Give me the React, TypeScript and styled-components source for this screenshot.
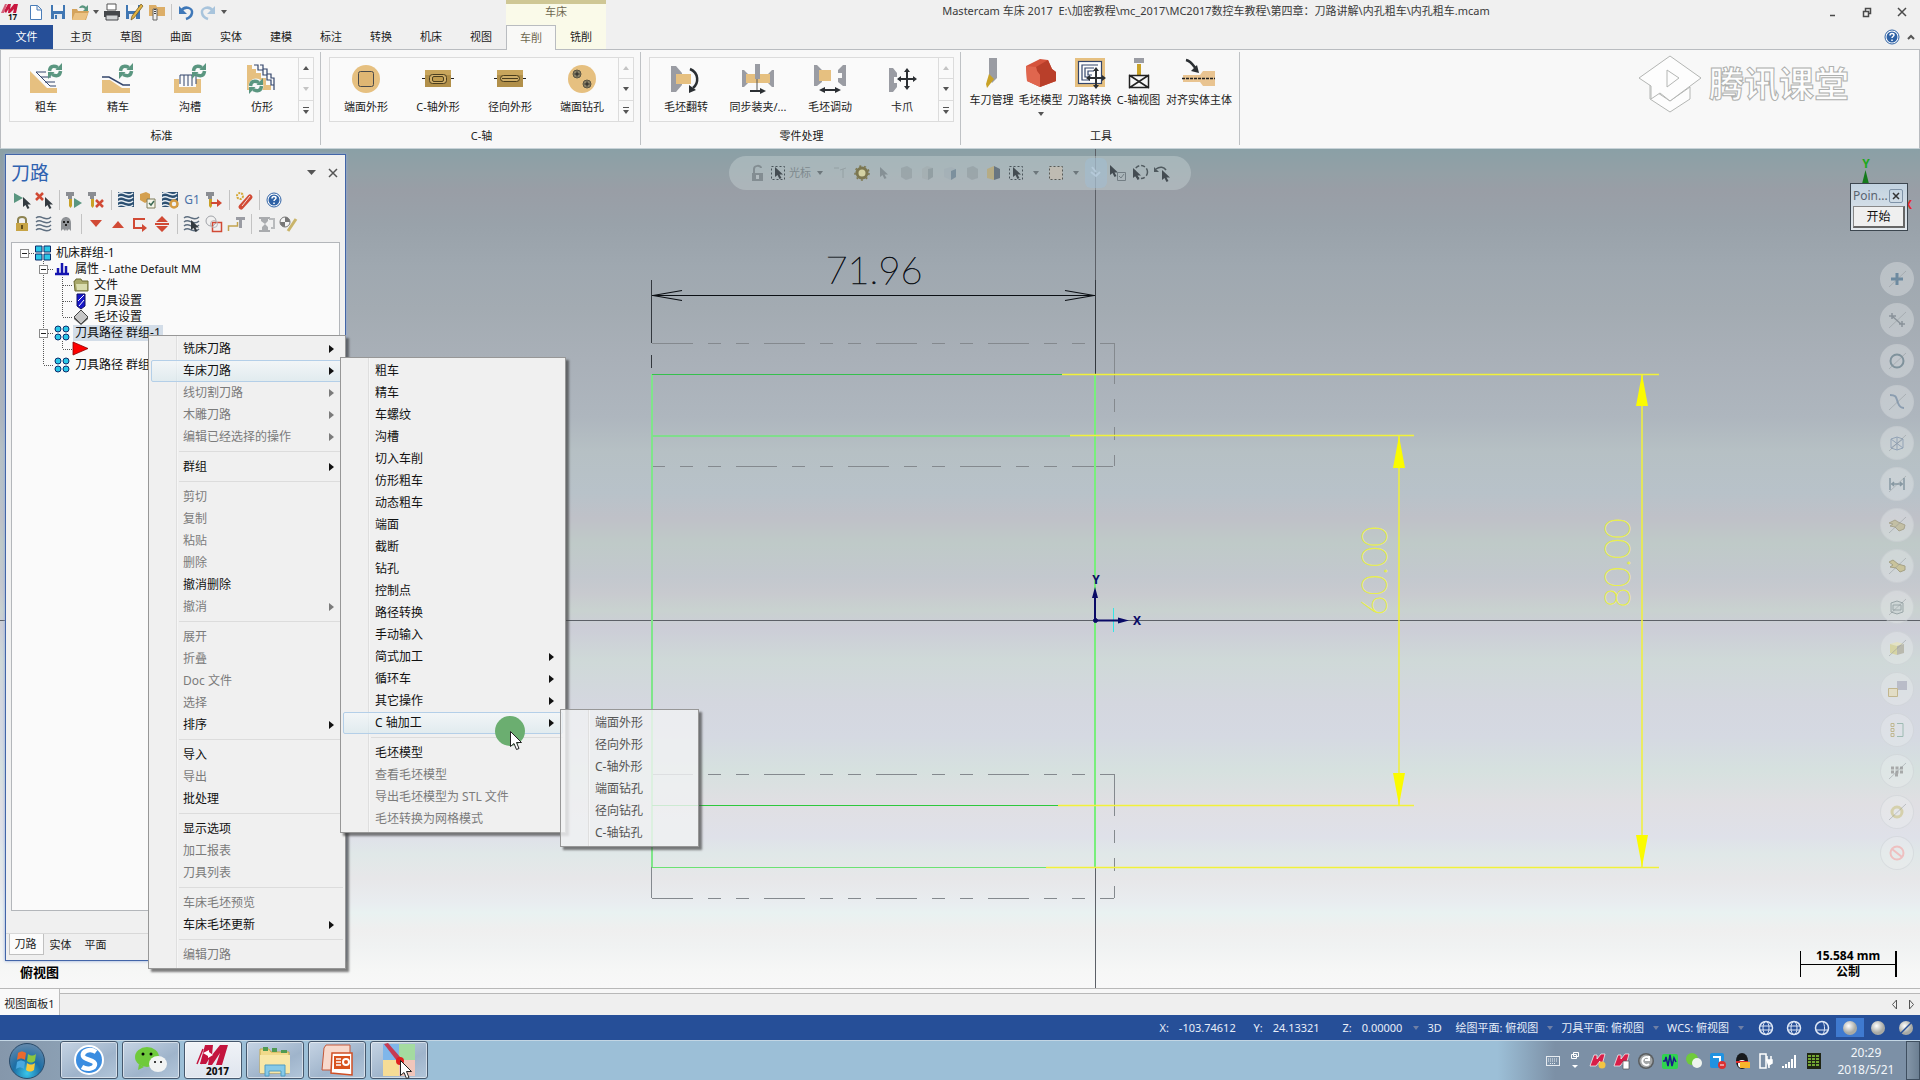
import React from "react";
import styled, { createGlobalStyle, css } from "styled-components";

const UI = `"Noto Sans", "Noto Sans CJK SC", sans-serif`;
const ORANGE = "#e6c080";
const NAVY = "#33456b";
const GREEN = "#5a9680";
const RED = "#d14a35";
const BLUE = "#2f62a5";
const GREY = "#9a9ca3";

const GlobalStyle = createGlobalStyle`
  *, *::before, *::after { box-sizing: border-box; }
  body { margin: 0; background: #efefef; font: 11px/16px ${UI}; color: #222; overflow: hidden; }
  button { font: inherit; color: inherit; border: 0; padding: 0; margin: 0; background: none; }
  ul { list-style: none; margin: 0; padding: 0; }
  svg { display: block; flex: none; overflow: visible; }
`;

/* ---------- icons ---------- */

const refresh = (x: number, y: number) => (
  <g transform={`translate(${x} ${y})`} fill="none" stroke={GREEN} strokeWidth="3.500">
    <path d="M1.500 7C2 2.500 5 1 10 3.500" />
    <path d="M12.500 7C12 11.500 9 13 4 10.500" />
    <path d="M14 -1v7H7.500z" fill={GREEN} stroke="none" />
    <path d="M0 15V8h6.500z" fill={GREEN} stroke="none" />
  </g>
);
const pointer = (x: number, y: number) => (
  <path transform={`translate(${x} ${y})`} d="M0 0v10l2.500-2 2 4 2-1-2-3.500H8z" fill="#333a40" />
);
const moveCross = (x: number, y: number) => (
  <g transform={`translate(${x} ${y})`} stroke="#2b2f33" strokeWidth="2" fill="#2b2f33">
    <path d="M-7 0H7M0-7V7" />
    <path stroke="none" d="M-10 0l4-3v6zM10 0l-4-3v6zM0-11l-3 4h6zM0 11l-3-4h6z" />
  </g>
);
const holder = (
  <>
    <path d="M1 1h8v4H7v3H3V5H1z" fill="#8a8d92" />
    <path d="M4 8h3v7l-1.500 2L4 15z" fill="#c9a227" />
  </>
);
const wavy = (stroke: string) => (
  <g fill="none" stroke={stroke} strokeWidth="1.500">
    {[3, 7, 11, 15].map((y) => (
      <path key={y} d={`M1 ${y}c3-2.500 5-1 7.500 0s5 1.500 7.500-1`} />
    ))}
  </g>
);

type Drawing = { w: number; h: number; d: React.ReactNode };
const ICONS: Record<string, Drawing> = {
  roughTurn: { w: 32, h: 30, d: (<><path d="M0 7L17 24H27v5H0z" fill={ORANGE} /><path d="M6 8l14 14h6M6 8h10M11 13h10M15 18h10" fill="none" stroke={NAVY} />{refresh(18, 0)}</>) },
  finishTurn: { w: 32, h: 30, d: (<><path d="M0 16h8l12 8h8v5H0z" fill={ORANGE} /><path d="M0 13h7l14 8h7" fill="none" stroke={NAVY} strokeWidth="1.500" />{refresh(17, 0)}</>) },
  groove: { w: 32, h: 30, d: (<><path d="M0 15h5v8h17v-8h5v14H0z" fill={ORANGE} /><path d="M6 20v-9h16v9M10 11v11M14 11v11M18 11v11" fill="none" stroke={NAVY} />{refresh(18, 0)}</>) },
  contour: { w: 32, h: 30, d: (<><path d="M1 1h5v4h4v4h5v5h5v7h5v5H1z" fill={ORANGE} /><path d="M8 1h4v5h5v5h4v5h4v5h3v5M14 1h3v4h4v5h4v4h3v12" fill="none" stroke={NAVY} strokeWidth="1.200" />
    <circle cx="10" cy="22" r="7.500" fill="#f8f8f8" />{refresh(3, 15)}</>) },
  faceContour: { w: 32, h: 30, d: (<><circle cx="16" cy="15" r="14" fill={ORANGE} /><rect x="8.500" y="7.500" width="15" height="15" rx="2" fill="#dfb673" stroke="#4a4a4a" /></>) },
  cContour: { w: 32, h: 30, d: (<><path d="M0 14.500h32" stroke="#222" /><rect x="3" y="6" width="26" height="17" fill="#b18f49" /><rect x="3" y="6" width="26" height="5" fill="#c8a55c" /><rect x="7.500" y="10.500" width="17" height="9" rx="3" fill="#d1b06b" stroke="#4a3d1d" /><rect x="10.500" y="12.500" width="11" height="5" rx="1.500" fill="#c09c50" stroke="#4a3d1d" /></>) },
  crossContour: { w: 32, h: 30, d: (<><path d="M0 14.500h32" stroke="#222" /><rect x="3" y="6" width="26" height="17" fill="#b18f49" /><rect x="3" y="6" width="26" height="5" fill="#c8a55c" /><rect x="6.500" y="11.500" width="19" height="6" rx="3" fill="#cfae69" stroke="#4a3d1d" /><path d="M8 14.500h16" stroke="#4a3d1d" /></>) },
  faceDrill: { w: 32, h: 30, d: (<><circle cx="16" cy="15" r="14" fill={ORANGE} /><g stroke="#5b5442" fill="#8b8268"><circle cx="11" cy="10" r="4" /><circle cx="21" cy="20" r="4" /></g><path d="M11 7.500v5M8.500 10h5M21 17.500v5M18.500 20h5" stroke="#222" /></>) },
  flip: { w: 32, h: 30, d: (<><path d="M1 2h5l6 7v12l-6 7H1z" fill={GREY} /><rect x="6" y="10" width="15" height="10" fill={ORANGE} /><path d="M20 5c9 4 9 14 3 19" fill="none" stroke="#2b2f33" strokeWidth="2.500" /><path d="M19 29v-8l7 5z" fill="#2b2f33" /></>) },
  pickoff: { w: 32, h: 30, d: (<><path d="M0 6h2l6 6v5l-6 6H0zM32 6h-2l-6 6v5l6 6h2z" fill={GREY} /><rect x="4" y="10" width="24" height="9" fill={ORANGE} /><path d="M13 0h5v15h-5z" fill={GREY} /><path d="M15 15v11" stroke="#555" /><path d="M8 27h12" stroke="#2b2f33" strokeWidth="2" /><path d="M24 27l-6-3v6z" fill="#2b2f33" /></>) },
  barfeed: { w: 34, h: 30, d: (<><path d="M1 1h3l5 5v12l-5 4H1zM33 1h-3l-5 5v3h4v5h-4v4l5 4h3z" fill={GREY} /><rect x="6" y="6" width="12" height="11" fill={ORANGE} /><path d="M10 26h14" stroke="#2b2f33" strokeWidth="2" /><path d="M6 26l6-3v6zM28 26l-6-3v6z" fill="#2b2f33" /></>) },
  chuck: { w: 32, h: 30, d: (<><path d="M3 4h4l4 5v4H8v6h3v4l-4 5H3z" fill={GREY} />{moveCross(21, 15)}</>) },
  toolManager: { w: 32, h: 30, d: (<><path d="M13 0h8v20l-5 5-3-5z" fill={GREY} /><path d="M13 16l5 5-7 9-1-4z" fill="#c9a227" /></>) },
  stockModel: { w: 32, h: 30, d: (<><path d="M1 8L15 1l8 1 4 9 4 3v9L15 29 2 23z" fill="#d5533c" /><path d="M15 29V17l-3-4-1-4 12-7 4 9 4 3v9z" fill="#b93f2a" /><path d="M1 8l10 1 1 4 3 4v12L2 23z" fill="#e0664e" /></>) },
  transform: { w: 32, h: 30, d: (<><rect x="1" y="0" width="30" height="29" fill={ORANGE} /><rect x="5" y="4" width="22" height="21" fill="#fdfdfd" /><g fill="none" stroke={NAVY} strokeWidth="1.200"><rect x="4.500" y="3.500" width="23" height="22" /><path d="M24 7H8v15h8M20 10h-9v9h6M20 13h-6v4h4" /></g>{moveCross(22, 20)}</>) },
  cView: { w: 32, h: 30, d: (<><rect x="11" y="0" width="10" height="5" fill={GREY} /><rect x="14" y="6" width="4" height="12" fill="#c9a227" /><path d="M6.500 17.500h19v12h-19zM6 17l20 13M26 17L6 30" fill="none" stroke="#222" strokeWidth="1.500" /></>) },
  align: { w: 34, h: 30, d: (<><path d="M1 17h17l3-4h12v15H21l-3-4H1z" fill="#e9c491" /><path d="M0 20.500h33" stroke="#222" strokeWidth="1.500" strokeDasharray="3 1" /><path d="M4 2c5 1 7 5 10 9" stroke="#2b2f33" strokeWidth="2.500" fill="none" /><path d="M17 15l-8-2 6-6z" fill="#2b2f33" /></>) },

  app: { w: 18, h: 18, d: (<><path d="M3 8L7 1h3L9 6l4-5h4l-2 9h-3l1-4-4 4H7l.5-4L5 10z" fill="#c8173f" /><path d="M0 10l4-9h2L3 10z" fill="#d5617a" /><text x="7" y="17" fontSize="8" fontWeight="700" fill="#111">17</text></>) },
  newDoc: { w: 18, h: 18, d: <path d="M3.500 2.500h7l4 4v10h-11zM10 2.500V7h4.500" fill="#fff" stroke="#4a7db8" /> },
  save: { w: 18, h: 18, d: (<><path d="M2 2h14v14H2z" fill="#4077b3" /><path d="M4 2h10v6H4z" fill="#f5f5f5" /><path d="M5 11h8v5H5z" fill="#e4e9ef" /><path d="M6 12h2v4H6z" fill="#4077b3" /></>) },
  open: { w: 18, h: 18, d: (<><path d="M1 6h5l1 2h8l3 0-3 9H1z" fill="#d4a35c" /><path d="M4 10h13l-3 7H1z" fill="#ebc283" /><path d="M8 5c2-4 5-3 7-1l2-2v6h-5l2-2c-2-2-4-1-6-1z" fill={GREEN} /></>) },
  print: { w: 18, h: 18, d: (<><path d="M4 1h9v6H4z" fill="#fff" stroke="#555" /><path d="M1 8h16v6H1z" fill="#44474b" /><path d="M3 12h12v5H3z" fill="#d2d4d6" stroke="#44474b" /></>) },
  saveAs: { w: 18, h: 18, d: (<><path d="M1 2h14v14H1z" fill="#4077b3" /><path d="M3 2h10v6H3z" fill="#f5f5f5" /><path d="M4 11h7v5H4z" fill="#e4e9ef" /><path d="M16 1l2 2-9 12-3 2 1-4z" fill="#e3b341" stroke="#6b5520" strokeWidth=".7" /></>) },
  zip: { w: 18, h: 18, d: (<><path d="M2 2h7l1 2h8v9H2z" fill="#dcae68" /><path d="M6 6h4v11H6z" fill="#f0f0f0" stroke="#666" /><path d="M8 6v6" stroke="#444" strokeDasharray="1 1" strokeWidth="2" /></>) },
  undo: { w: 18, h: 18, d: (<><path d="M4 8c4-6 12-3 11 2-.5 3-3 5-6 6" fill="none" stroke="#3f78b8" strokeWidth="2.500" /><path d="M2 3v8h8z" fill="#3f78b8" /></>) },
  redo: { w: 18, h: 18, d: (<><path d="M14 8C10 2 2 5 3 10c.5 3 3 5 6 6" fill="none" stroke="#a8c4dc" strokeWidth="2.500" /><path d="M16 3v8H8z" fill="#a8c4dc" /></>) },
  help: { w: 16, h: 16, d: (<><circle cx="8" cy="8" r="7" fill="#fff" stroke={BLUE} /><circle cx="8" cy="8" r="5.500" fill={BLUE} /><path d="M6 6.500c0-3 4-2.500 4-.5 0 1.500-2 1.500-2 3M8 10.500v1.500" stroke="#fff" strokeWidth="1.500" fill="none" /></>) },

  playSel: { w: 18, h: 18, d: (<><path d="M1 2l9 5-9 5z" fill={GREEN} />{pointer(10, 6)}</>) },
  xSel: { w: 18, h: 18, d: (<><path d="M1 2l7 7M8 2L1 9" stroke={RED} strokeWidth="2.500" />{pointer(10, 6)}</>) },
  toolPlay: { w: 18, h: 18, d: (<>{holder}<path d="M9 7l8 5-8 5z" fill={GREEN} /></>) },
  toolX: { w: 18, h: 18, d: (<>{holder}<path d="M9 9l7 7M16 9l-7 7" stroke={RED} strokeWidth="2.500" /></>) },
  wavesDark: { w: 18, h: 18, d: (<><rect x="1" y="1" width="16" height="15" fill="#2c5072" />{wavy("#e8eef4")}</>) },
  verify: { w: 18, h: 18, d: (<><path d="M1 3l6-2 4 2v6l-5 3-5-3z" fill="#d4a04f" /><path d="M8 8h8v9H8z" fill="#f5f5ea" stroke="#7c7a58" /><path d="M10 12l2 2 3-4" fill="none" stroke="#3e6a55" strokeWidth="1.500" /></>) },
  wavesGear: { w: 18, h: 18, d: (<><rect x="1" y="1" width="16" height="15" fill="#2c5072" />{wavy("#e8eef4")}<circle cx="13" cy="13" r="3.500" fill="#f0f0f0" stroke="#d59b42" strokeWidth="2.500" /></>) },
  toolArrow: { w: 18, h: 18, d: (<>{holder}<path d="M6 12h8" stroke={RED} strokeWidth="2" /><path d="M17 12l-5-4v8z" fill={RED} /></>) },
  wand: { w: 18, h: 18, d: (<><path d="M6 16L15 6" stroke={RED} strokeWidth="5" strokeLinecap="round" /><path d="M7 15l8-10" stroke="#f3ddd8" /><circle cx="5" cy="5" r="3" fill="none" stroke="#d5a93b" strokeWidth="2" strokeDasharray="2 1" /></>) },
  lock: { w: 18, h: 18, d: (<><path d="M5 8V5c0-4 8-4 8 0v3" fill="none" stroke="#8d8350" strokeWidth="2" /><rect x="3" y="8" width="12" height="8" fill="#c7a445" /><path d="M9 10v4" stroke="#5f4d1c" strokeWidth="2" /></>) },
  waves: { w: 18, h: 18, d: wavy("#5f6f80") },
  ghost: { w: 18, h: 18, d: (<><path d="M4 16V8c0-8 10-8 10 0v8l-2-2-2 2-1-2-1 2-2-2z" fill="#8f9296" /><path d="M6 6h2v2H6zM10 6h2v2h-2zM8 9h2v2H8z" fill="#222" /></>) },
  triDown: { w: 18, h: 18, d: <path d="M3 5h12l-6 7z" fill={RED} /> },
  triUp: { w: 18, h: 18, d: <path d="M3 13h12L9 6z" fill={RED} /> },
  loopArrow: { w: 18, h: 18, d: (<><path d="M14 4H3v9h8" fill="none" stroke={RED} strokeWidth="2" /><path d="M16 13l-5-4v8z" fill={RED} /></>) },
  triBoth: { w: 18, h: 18, d: <path d="M9 1l6 6H3zM9 17l6-6H3zM2 8h14v2H2z" fill={RED} /> },
  wavesPick: { w: 18, h: 18, d: (<>{wavy("#5f6f80")}{pointer(8, 5)}</>) },
  shapes: { w: 18, h: 18, d: (<><circle cx="6" cy="6" r="5" fill="none" stroke="#a0a3a8" /><path d="M7.500 7.500h9v9h-9z" fill="none" stroke={RED} strokeWidth="1.500" /><circle cx="9" cy="9" r="3.500" fill="none" stroke="#b9b9b9" /></>) },
  stepTool: { w: 18, h: 18, d: (<><path d="M1.500 16v-5h9V7" fill="none" stroke="#c2a34e" strokeWidth="1.500" /><path d="M9 2h9v3h-3v8h-3V5H9z" fill="#9a9ca3" /></>) },
  machineOff: { w: 18, h: 18, d: (<><path d="M2 2h11v2h-2v2l-3 3 3 3v3h2v2H2v-2h3v-3l3-3-4-3V4H2z" fill="#a9abae" /><path d="M12 4h5v9h-3" fill="none" stroke="#b9bbbd" strokeWidth="2" /></>) },
  ballTool: { w: 18, h: 18, d: (<><circle cx="6" cy="7" r="5" fill="#f5f5f5" stroke="#777" /><path d="M6 2a5 5 0 015 5H6zM6 12a5 5 0 01-5-5h5z" fill="#777" /><path d="M17 4L9 16" stroke="#c9b46a" strokeWidth="3" /></>) },

  machineGroup: { w: 16, h: 16, d: <path d="M.5 1h6.500v6H.5zM9 1h6.500v6H9zM.5 9h6.500v6H.5zM9 9h6.500v6H9z" fill="#2ac7e8" stroke="#0b2c6b" /> },
  props: { w: 16, h: 16, d: <path d="M1 13h14M4 12V7M8 12V2M12 12V5" stroke="#1414b0" strokeWidth="2.500" /> },
  files: { w: 16, h: 16, d: (<><path d="M1 4h1l1-2h5l1 2h6v10H2z" fill="#a8a86a" stroke="#6d6d35" /><path d="M3 7h11v6H4z" fill="#d9dcae" /></>) },
  toolSet: { w: 16, h: 16, d: (<><path d="M4 1h8v12l-4 3-4-3z" fill="#1616c8" stroke="#101060" /><path d="M5 8l6-6M6 13l5-6" stroke="#fff" /></>) },
  stock: { w: 16, h: 16, d: (<><path d="M8 1l7 7-7 7-7-7z" fill="#c6c6c6" stroke="#444" /><path d="M1 8l7 7 7-7v2l-7 6-7-6z" fill="#555" /></>) },
  pathGroup: { w: 16, h: 16, d: (<g fill="#2ac7e8" stroke="#0b2c6b"><circle cx="4" cy="4" r="3" /><circle cx="12" cy="4" r="3" /><circle cx="4" cy="12" r="3" /><circle cx="12" cy="12" r="3" /></g>) },
  insert: { w: 16, h: 16, d: <path d="M0 1l15 6.500L0 14z" fill="#f00" stroke="#800" strokeWidth=".8" /> },

  selLock: { w: 18, h: 18, d: (<><path d="M5 9V5c0-4 7-4 7-1" fill="none" stroke="#7d878c" strokeWidth="2" /><path d="M3 9h11v8H3z" fill="#7d878c" /><path d="M7 11h3v4H7z" fill="#b5bec2" /></>) },
  selPick: { w: 18, h: 18, d: (<><path d="M2.500 2.500h13v13h-13z" fill="none" stroke="#3a454b" strokeDasharray="2 2" />{pointer(6, 3)}</>) },
  faintArrow: { w: 18, h: 18, d: <g opacity=".35">{pointer(5, 3)}</g> },
  axisPick: { w: 18, h: 18, d: <path d="M3 4h5M12 5v9M9 6l6-2" stroke="#8a9498" fill="none" opacity=".7" /> },
  gear: { w: 18, h: 18, d: (<><circle cx="9" cy="9" r="5" fill="#dcd8a0" stroke="#756d3f" strokeWidth="3" /><circle cx="9" cy="9" r="7" fill="none" stroke="#756d3f" strokeWidth="1.500" strokeDasharray="2 3" /></>) },
  solid1: { w: 18, h: 18, d: <path d="M4 4l6-2 5 3v9l-6 2-5-3z" fill="#8d979c" opacity=".6" /> },
  solid2: { w: 18, h: 18, d: (<g opacity=".6"><path d="M3 5l5-3 6 2v9l-5 3-6-2z" fill="#a3abad" /><path d="M9 5l5-1v9l-5 3z" fill="#7d8a90" /></g>) },
  solid3: { w: 18, h: 18, d: (<g opacity=".7"><path d="M3 5l7-2 5 2v8l-5 3-7-3z" fill="#a3b0b7" /><path d="M10 7l5-2v8l-5 3z" fill="#60788a" /></g>) },
  solidShade: { w: 18, h: 18, d: (<><path d="M2 5l7-3v14l-7-2z" fill="#b9ab7c" /><path d="M9 2l6 3v9l-6 2z" fill="#5e6b78" /></>) },
  dashBox: { w: 18, h: 18, d: <path d="M2.500 2.500h13v13h-13z" fill="#c3bcb1" stroke="#4b4b45" strokeDasharray="2 2" /> },
  chain: { w: 18, h: 18, d: <path d="M5 3l4 5M4 8l5 4 4-4" stroke="#b7cbdc" fill="none" strokeWidth="2" /> },
  pickCheck: { w: 18, h: 18, d: (<>{pointer(1, 1)}<path d="M8.500 8.500h8v8h-8zM10 12l2 2 3-4" fill="none" stroke="#6a757b" /></>) },
  pickCircle: { w: 18, h: 18, d: (<><circle cx="10" cy="8" r="6.500" fill="none" stroke="#414b50" strokeWidth="1.500" strokeDasharray="4 2" />{pointer(2, 4)}</>) },
  pickBack: { w: 18, h: 18, d: (<><path d="M3 5c4-3 8-2 10 1" fill="none" stroke="#414b50" strokeWidth="1.500" /><path d="M1 3v5h5z" fill="#414b50" />{pointer(9, 6)}</>) },
};

const Glyph = ({ name }: { name: string }) => {
  const i = ICONS[name];
  return <svg width={i.w} height={i.h} viewBox={`0 0 ${i.w} ${i.h}`} aria-hidden="true">{i.d}</svg>;
};

const Caret = styled.span<{ $c?: string; $up?: boolean }>`
  width: 0; height: 0; flex: none;
  border-left: 3px solid transparent; border-right: 3px solid transparent;
  ${(p) => p.$up ? css`border-bottom: 4px solid ${p.$c || "#555"};` : css`border-top: 4px solid ${p.$c || "#555"};`}
`;

/* ---------- shell ---------- */

const Shell = styled.div`
  position: relative; height: 100vh; min-width: 1280px;
  display: flex; flex-direction: column;
`;
const TitleBar = styled.header`display: flex; height: 25px; background: #f0f0f0;`;
const QuickBar = styled.div`width: 506px; display: flex; align-items: center; padding: 0 0 2px 1px; gap: 4px;`;
const QuickBtn = styled.button`width: 18px; height: 18px;`;
const QuickSep = styled.span`width: 1px; height: 16px; margin: 0 1px 0 2px; background: #c6c6c6;`;
const ContextHead = styled.div`
  width: 100px; text-align: center; line-height: 16px; color: #6f6850;
  background: #fafae9; border-top: 4px solid #cfc795;
`;
const Title = styled.h1`
  flex: 1; margin: 0; text-align: center; font-weight: 400; font-size: 11px; line-height: 22px;
  color: #3a3a3a; white-space: pre;
`;
const WindowBtns = styled.div`display: flex; width: 94px; align-items: center; justify-content: space-between; padding-right: 11px;`;

const TabRow = styled.nav`display: flex; height: 24px; background: #f0f0f0; padding-right: 4px; align-items: center;`;
const FileTab = styled.button`width: 53px; height: 24px; margin-right: 3px; background: #264f98; color: #fff;`;
const Tab = styled.button<{ $kind?: "active" | "context" }>`
  width: 50px; height: 24px; color: #1c1c1c;
  ${(p) => p.$kind === "context" && css`background: #fafae9;`}
  ${(p) => p.$kind === "active" && css`
    height: 25px; background: #f9f9f7; border: 1px solid #b9bcc0; border-bottom: 0; color: #6f6850;
    align-self: flex-start; position: relative; z-index: 1;
  `}
`;
const TabSpacer = styled.span`flex: 1;`;

const Ribbon = styled.section`
  display: flex; height: 100px; background: #f8f8f8; border: 1px solid #b9bcc0; border-bottom-color: #c8d3d8;
`;
const Group = styled.section<{ $w: number }>`
  width: ${(p) => p.$w}px; padding: 7px 7px 0 8px; display: flex; flex-direction: column; position: relative;
  &::after { content: ""; position: absolute; right: 0; top: 2px; bottom: 3px; width: 1px; background: #bfc2c5; }
`;
const GroupName = styled.h2`margin: 6px 0 0; font-size: 11px; line-height: 16px; font-weight: 400; text-align: center;`;
const Gallery = styled.div`display: flex; height: 65px; border: 1px solid #dcdcdc; background: #fafafa;`;
const GalleryItem = styled.button`
  width: 72px; display: flex; flex-direction: column; align-items: center; gap: 5px; padding-top: 6px; white-space: nowrap;
`;
const Scroll = styled.div`
  width: 15px; margin-left: auto; display: flex; flex-direction: column; border-left: 1px solid #dcdcdc;
`;
const ScrollBtn = styled.button`
  flex: 1; display: grid; place-content: center; justify-items: center; gap: 2px;
  & + & { border-top: 1px solid #dcdcdc; }
`;
const Bar = styled.span`width: 6px; height: 1px; background: #555;`;
const Tools = styled.div`display: flex; height: 65px; margin: 0 -2px;`;
const Tool = styled.button<{ $wide?: boolean }>`
  flex: 0 0 ${(p) => (p.$wide ? 72 : 49)}px; display: flex; flex-direction: column; align-items: center; gap: 4px;
  white-space: nowrap; padding-top: 1px;
`;
const Watermark = styled.div`
  margin: 4px 70px 0 auto; display: flex; align-items: flex-start; gap: 5px; padding-top: 1px;
`;
const WatermarkText = styled.span`
  font: 700 35px/54px "Noto Sans CJK SC", sans-serif; color: #fdfdfd; -webkit-text-stroke: 1px #aeb0ae;
`;

/* ---------- viewport ---------- */

const Viewport = styled.main`
  position: relative; flex: 1; min-height: 0; display: flex; padding: 5px 5px 0;
  background: linear-gradient(180deg,
    #8aa0a6 0%, #94a0a6 3%, #999ea6 5%, #99a2aa 9%, #9fa8b0 14%, #a3abb2 19%, #a9b0b8 25%, #aeb6be 32%,
    #b6c0c4 36%, #b8c2c9 41%, #bfc1c8 44%, #bfcac8 47%, #c3c8ce 51%, #c8cacf 53%, #c9d2d0 55%, #cccdd7 57%,
    #cfd9d8 61%, #d4d7df 66%, #d5d9e2 70%, #d6e1df 74%, #e0dfe3 78%, #dfe1e9 82%, #e0e8e8 84%,
    #e7e7e9 87%, #e9edf0 90%, #e9f2f1 91%, #efefef 93%, #f0f2f2 95%, #f6f7f6 98%, #f8f8f8 100%);
`;
const Drawing = styled.svg`position: absolute; inset: 0; width: 100%; height: 100%;`;
const DimText = styled.text<{ $size: number; $ink: string }>`
  font: 100 ${(p) => p.$size}px Lato, "Open Sans", sans-serif; fill: ${(p) => p.$ink}; stroke: ${(p) => p.$ink}; stroke-width: 0.6px;
`;

const Dock = styled.div`position: relative; width: 341px; display: flex; flex-direction: column;`;
const Panel = styled.aside`
  flex: 1; min-height: 0; display: flex; flex-direction: column; background: #f0f0f0; border: 1px solid #4265a8;
  box-shadow: 0 0 3px #8ea8d8;
`;
const PanelHead = styled.div`display: flex; align-items: center; height: 33px; padding: 2px 7px 0 5px; gap: 11px;`;
const PanelTitle = styled.h2`margin: 0 auto 0 0; font-size: 19px; line-height: 28px; font-weight: 400; color: #2f62b0;`;
const ToolRow = styled.div`display: flex; height: 24px; padding-left: 5px; align-items: center;`;
const ToolBtn = styled.button`width: 22px; height: 22px; display: grid; place-content: center; color: #4a72a8; font-size: 12px;`;
const ToolSep = styled.span`width: 8px; height: 20px; background: linear-gradient(#c3c3c3, #c3c3c3) 4px 0 / 1px 100% no-repeat;`;
const Tree = styled.ul`
  flex: 1; margin: 6px 5px 0; border: 1px solid #b3b6ba; background: #fafafa; padding: 2px 0 0 4px;
  font-size: 12px; color: #111;
`;
const TreeRow = styled.li`display: flex; height: 16px; align-items: center;`;
const TreeText = styled.span<{ $sel?: boolean }>`
  line-height: 16px; padding: 0 2px; margin-left: 3px; white-space: pre; ${(p) => p.$sel && "background: #d3dde8;"}
  small { font-size: 11px; }
`;
const PanelTabs = styled.div`
  display: flex; height: 27px; margin-top: 22px; padding: 0 0 5px 3px; background: #efefef; border-top: 1px solid #d8d8d8;
`;
const PanelTab = styled.button<{ $on?: boolean }>`
  width: 35px; padding-right: 2px; ${(p) => p.$on && "background: #fbfbfb; border: 1px solid #c0c0c0; border-top: 0;"}
`;
const ViewName = styled.div`height: 27px; padding: 3px 0 0 15px; font: 700 13px/16px "Noto Sans CJK SC", sans-serif; color: #000;`;

const SelectionBar = styled.div`
  position: absolute; left: 50%; top: 7px; transform: translateX(-50%);
  display: flex; align-items: center; height: 34px; width: 462px; padding: 0 18px; border-radius: 17px;
  background: rgba(198, 208, 211, 0.45); color: #7e898e;
  svg { opacity: 0.85; }
`;
const SelBtn = styled.button<{ $on?: boolean }>`
  flex: none; min-width: 22px; height: 30px; display: flex; align-items: center; justify-content: center; gap: 2px; white-space: nowrap;
  ${(p) => p.$on && "background: rgba(160,190,215,.45); border-radius: 6px;"}
`;
const SelCaret = styled.span`flex: none; width: 18px; display: grid; place-content: center;`;
const Filters = styled.div`
  position: relative; margin: 108px 1px 0 auto; display: flex; flex-direction: column; gap: 7px;
`;
const FilterBtn = styled.button`
  width: 34px; height: 34px; border-radius: 50%; background: rgba(238, 242, 242, 0.35);
  border: 1px solid rgba(190, 195, 200, 0.35); display: grid; place-content: center;
`;
const PointWin = styled.section`
  position: absolute; right: 12px; top: 34px; width: 58px; height: 48px; border: 1px solid #3c464f;
  background: linear-gradient(#c2d2e0, #e4e9ee); padding: 4px 2px 2px; font-size: 12px; color: #5a6470;
`;
const PointHead = styled.div`display: flex; justify-content: space-between; align-items: center; line-height: 16px; padding-right: 2px;`;
const PointClose = styled.button`width: 14px; height: 14px; border: 1px solid #7f93a8; border-radius: 2px; display: grid; place-content: center;`;
const PointStart = styled.button`
  display: block; width: 52px; height: 22px; margin-top: 2px; color: #111; background: #efefef;
  border: 1px solid #888; border-right: 2px solid #666; border-bottom: 2px solid #666;
`;
const ScaleMark = styled.div`
  position: absolute; right: 23px; bottom: 11px; width: 97px; height: 26px; border: 1px solid #000; border-width: 0 2px 0 1px;
  background: linear-gradient(#000, #000) 0 13px / 100% 1px no-repeat;
  font: 700 12px/16px ${UI}; color: #000;
  display: grid; align-content: center; justify-items: center;
`;

/* ---------- menus ---------- */

const MenuList = styled.ul<{ $glass?: boolean }>`
  position: absolute; padding: 2px; border: 1px solid #979797; font-size: 12px; white-space: nowrap; z-index: 5;
  background: linear-gradient(90deg, transparent 27px, #dfdfdf 27px, #dfdfdf 28px, #fbfbfb 28px, transparent 29px),
    ${(p) => (p.$glass ? "rgba(240,241,243,.82)" : "#f0f0f0")};
  box-shadow: 3px 3px 2px rgba(60, 60, 60, 0.65);
`;
const RootMenu = styled(MenuList)`left: 148px; top: 335px; width: 198px;`;
const LatheMenu = styled(MenuList)`left: 189px; top: -3px; width: 226px;`;
const AxisMenu = styled(MenuList)`left: 217px; top: -3px; width: 139px;`;
const MenuRow = styled.li`position: relative;`;
const MenuBtn = styled.button<{ $off?: boolean; $hot?: boolean; $soft?: boolean }>`
  width: 100%; height: 22px; display: flex; align-items: center; justify-content: space-between;
  padding: 0 8px 0 31px; line-height: 20px; border: 1px solid transparent; border-radius: 2px;
  color: ${(p) => (p.$off ? "#7b7b7b" : p.$soft ? "#555" : "#111")};
  ${(p) => p.$hot && "border-color: #b4cfe8; background: linear-gradient(rgba(243,248,250,.7), rgba(215,232,238,.6));"}
`;
const MenuSep = styled.li`height: 8px; margin-left: 28px; background: linear-gradient(#dcdcdc, #dcdcdc) 0 3px / 100% 1px no-repeat;`;
const SubArrow = styled.span`border: 4px solid transparent; border-left: 5px solid currentColor; border-right: 0; width: 5px;`;
const ClickHalo = styled.span`
  position: absolute; left: 495px; top: 716px; width: 30px; height: 30px; border-radius: 50%;
  background: #6bae70; z-index: 8; pointer-events: none;
`;
const Cursor = styled.span<{ $x: number; $y: number }>`
  position: absolute; left: ${(p) => p.$x}px; top: ${(p) => p.$y}px; z-index: 9; pointer-events: none;
`;

/* ---------- bottom bars ---------- */

const SheetBar = styled.div`
  display: flex; height: 27px; border-top: 1px solid #b8b8b8; background: #f7f7f7; padding-top: 4px; position: relative;
`;
const SheetTab = styled.button`width: 60px; border-right: 1px solid #bdbdbd; background: #f9f9f9; margin-top: -4px; padding-top: 4px;`;
const SheetRest = styled.div`
  flex: 1; background: #efefef; border-top: 1px solid #b8b8b8; display: flex; justify-content: flex-end;
  align-items: center; gap: 10px; padding-right: 5px;
`;
const StatusBar = styled.footer`
  display: flex; height: 25px; background: #264f98; color: #e8eef8; justify-content: flex-end; align-items: center;
`;
const Readout = styled.span<{ $w: number }>`width: ${(p) => p.$w}px; display: flex; gap: 10px; white-space: nowrap;`;
const StatusBtn = styled.button<{ $w?: number }>`
  display: flex; align-items: center; white-space: nowrap; height: 25px; ${(p) => p.$w && `width: ${p.$w}px;`}
`;
const StatusCaret = styled.span`width: 23px; display: grid; place-content: center;`;
const ShadeBtn = styled.button<{ $on?: boolean }>`
  width: 28px; height: 19px; display: grid; place-content: center; ${(p) => p.$on && "background: #3f7ad0;"}
`;
const TaskBar = styled.div`
  display: flex; height: 40px; gap: 4px; border-top: 1px solid #c3d6e4;
  background: linear-gradient(90deg, #8597ab 0, #8b9fb3 60px, #9cbfd7 61px, #9cbfd7 78%, #7c90a6 81%, #7c90a6 100%);
`;
const StartBtn = styled.button`width: 56px; padding-left: 8px; height: 39px;`;
const TaskBtn = styled.button<{ $on?: boolean }>`
  width: 58px; height: 38px; border: 1px solid #46586d; border-radius: 3px; display: grid; place-content: center;
  box-shadow: inset 0 0 0 1px rgba(255, 255, 255, 0.5);
  background: ${(p) => (p.$on ? "linear-gradient(#f0f3f7, #dfe5ee)" : "linear-gradient(150deg, #c6d4e4, #9fb4cb 60%, #b2c6da)")};
`;
const Tray = styled.div`margin-left: auto; display: flex; align-items: center; color: #fff;`;
const TrayBtn = styled.button<{ $slim?: boolean }>`width: ${(p) => (p.$slim ? 22 : 24)}px; height: 24px; display: grid; place-content: center;`;
const Clock = styled.time`width: 80px; text-align: center; font-size: 12px; line-height: 17px; color: #f2f6fa;`;
const Peek = styled.button`width: 14px; height: 39px; border: 1px solid #3f4f60; background: linear-gradient(90deg, #8496a8, #6c7f92);`;

/* ---------- data ---------- */

const GALLERIES: { name: string; items: [string, string][]; canUp?: boolean }[] = [
  { name: "标准", canUp: true, items: [["粗车", "roughTurn"], ["精车", "finishTurn"], ["沟槽", "groove"], ["仿形", "contour"]] },
  { name: "C-轴", items: [["端面外形", "faceContour"], ["C-轴外形", "cContour"], ["径向外形", "crossContour"], ["端面钻孔", "faceDrill"]] },
  { name: "零件处理", items: [["毛坯翻转", "flip"], ["同步装夹/...", "pickoff"], ["毛坯调动", "barfeed"], ["卡爪", "chuck"]] },
];
const TOOLS: [string, string][] = [["车刀管理", "toolManager"], ["毛坯模型", "stockModel"], ["刀路转换", "transform"], ["C-轴视图", "cView"], ["对齐实体主体", "align"]];
const PANEL_ROWS = [
  ["playSel", "xSel", "|", "toolPlay", "toolX", "|", "wavesDark", "verify", "wavesGear", "G1", "toolArrow", "|", "wand", "|", "help"],
  ["lock", "waves", "ghost", "|", "triDown", "triUp", "loopArrow", "triBoth", "|", "wavesPick", "shapes", "stepTool", "|", "machineOff", "ballTool"],
];
type GuideKind = "blank" | "root" | "exp" | "vert" | "tee" | "corner";
const TREE: { g: GuideKind[]; icon: string; text: string; latin?: string; sel?: boolean }[] = [
  { g: ["root"], icon: "machineGroup", text: "机床群组-1" },
  { g: ["blank", "exp"], icon: "props", text: "属性 ", latin: "- Lathe Default MM" },
  { g: ["blank", "vert", "tee"], icon: "files", text: "文件" },
  { g: ["blank", "vert", "tee"], icon: "toolSet", text: "刀具设置" },
  { g: ["blank", "vert", "corner"], icon: "stock", text: "毛坯设置" },
  { g: ["blank", "exp"], icon: "pathGroup", text: "刀具路径 群组-1", sel: true },
  { g: ["blank", "vert", "corner"], icon: "insert", text: "" },
  { g: ["blank", "corner"], icon: "pathGroup", text: "刀具路径 群组-2" },
];

type Entry = "-" | { t: string; off?: boolean; sub?: boolean; menu?: React.ReactNode };
const off = (t: string, sub = false): Entry => ({ t, off: true, sub });
const on = (t: string, sub = false, menu?: React.ReactNode): Entry => ({ t, sub, menu });

const Entries = ({ list, soft }: { list: Entry[]; soft?: boolean }) => (
  <>
    {list.map((e, i) =>
      e === "-" ? <MenuSep key={i} role="separator" /> : (
        <MenuRow key={i} role="none">
          <MenuBtn role="menuitem" $off={e.off} $hot={!!e.menu} $soft={soft} aria-haspopup={e.sub || undefined}>
            {e.t}{e.sub && <SubArrow />}
          </MenuBtn>
          {e.menu}
        </MenuRow>
      ))}
  </>
);

const axisMenu = (
  <AxisMenu role="menu" $glass>
    <Entries soft list={["端面外形", "径向外形", "C-轴外形", "端面钻孔", "径向钻孔", "C-轴钻孔"].map((t) => on(t))} />
  </AxisMenu>
);
const latheMenu = (
  <LatheMenu role="menu">
    <Entries list={[
      ...["粗车", "精车", "车螺纹", "沟槽", "切入车削", "仿形粗车", "动态粗车", "端面", "截断", "钻孔", "控制点", "路径转换", "手动输入"].map((t) => on(t)),
      on("简式加工", true), on("循环车", true), on("其它操作", true), on("C 轴加工", true, axisMenu), "-",
      on("毛坯模型"), off("查看毛坯模型"), off("导出毛坯模型为 STL 文件"), off("毛坯转换为网格模式"),
    ]} />
  </LatheMenu>
);
const ROOT: Entry[] = [
  on("铣床刀路", true), on("车床刀路", true, latheMenu), off("线切割刀路", true), off("木雕刀路", true), off("编辑已经选择的操作", true), "-",
  on("群组", true), "-",
  off("剪切"), off("复制"), off("粘贴"), off("删除"), on("撤消删除"), off("撤消", true), "-",
  off("展开"), off("折叠"), off("Doc 文件"), off("选择"), on("排序", true), "-",
  on("导入"), off("导出"), on("批处理"), "-",
  on("显示选项"), off("加工报表"), off("刀具列表"), "-",
  off("车床毛坯预览"), on("车床毛坯更新", true), "-",
  off("编辑刀路"),
];

const Guide = ({ kind }: { kind: GuideKind }) => (
  <svg width="19" height="16" viewBox="0 0 19 16" aria-hidden="true">
    <g stroke="#555" strokeDasharray="1 1">
      {(kind === "vert" || kind === "tee" || kind === "exp") && <path d="M8.500 0v16" />}
      {kind === "corner" && <path d="M8.500 0v8" />}
      {kind !== "blank" && kind !== "vert" && <path d="M9 8.500h10" />}
    </g>
    {(kind === "root" || kind === "exp") && (
      <><rect x="4.500" y="4.500" width="8" height="8" fill="#fff" stroke="#8a8a8a" /><path d="M6 8.500h5" stroke="#222" /></>
    )}
  </svg>
);

const arrowCursor = (
  <svg width="13" height="20" viewBox="0 0 13 20" aria-hidden="true">
    <path d="M.5.5v15l3.500-3 2.500 6 2.500-1-2.500-6h5z" fill="#fff" stroke="#222" />
  </svg>
);

/* ---------- part drawing ---------- */

const DASH = "41 15 13 15 13 15";
const PartDrawing = () => (
  <Drawing viewBox="0 149 1920 839" preserveAspectRatio="xMidYMid meet" role="img" aria-label="俯视图">
    <path d="M-400 620.500H2320M1095.500 149V988" stroke="#5c6067" />
    <g fill="none" stroke="#84898e">
      <path d="M652 343.500H1114" strokeDasharray={DASH} />
      <path d="M652 466.500H1114" strokeDasharray={DASH} strokeDashoffset="-84" />
      <path d="M652 466.500h13M680 466.500h13M708 466.500h13" />
      <path d="M1114.500 343V466" strokeDasharray="41 15 13 15 13 15" />
      <path d="M652 774.500H1114M652 898.500H1114" strokeDasharray={DASH} />
      <path d="M1114.500 774V898" strokeDasharray="42 14 13 15 13 15" />
      <path d="M651.500 774V898" />
    </g>
    <path d="M652 374V867" stroke="#7fe58a" strokeWidth="2" />
    <path d="M1095 374V867" stroke="#78ee7c" strokeWidth="2" />
    <path d="M652 374.500H1062" stroke="#35c04c" />
    <path d="M652 436H1070" stroke="#80dd8c" strokeWidth="2" />
    <path d="M652 805.500H1058" stroke="#2ec83c" />
    <path d="M652 867.500H1046" stroke="#6be273" />
    <path d="M651.500 280V343M651.500 355V368M1095.500 280V374" stroke="#33383e" />
    <path d="M652 295.500H1095M682 290.500l-29 5 29 5M1065 290.500l29 5-29 5" fill="none" stroke="#0b0f14" strokeWidth="1.200" />
    <DimText $size={38} $ink="#0b0f14" x="874" y="284" textAnchor="middle">71.96</DimText>
    <path d="M1062 374.500H1659M1070 435.500H1414M1058 805.500H1414M1046 867.500H1659M1399 436V805M1642 374V867" stroke="#f1f13a" strokeWidth="1.500" />
    <path d="M1399 436l6 32h-12zM1399 805l6-32h-12zM1642 374l6 32h-12zM1642 867l6-32h-12z" fill="#fbfb00" />
    <DimText $size={35} $ink="#e8ee50" transform="translate(1387 571) rotate(-90)" textAnchor="middle">60.00</DimText>
    <DimText $size={35} $ink="#e8ee50" transform="translate(1630 563) rotate(-90)" textAnchor="middle">80.00</DimText>
    <path d="M1113.500 608V632" stroke="#35e6e6" />
    <g fill="#0a0a66" stroke="#0a0a66">
      <circle cx="1095.500" cy="620.500" r="2" />
      <path d="M1095 620V594M1095 620.500H1120" strokeWidth="2" />
      <path d="M1095 587l3 11h-6zM1129 620.500l-11 3v-6z" stroke="none" />
    </g>
    <g fontFamily="Noto Sans, sans-serif" fontSize="12" fontWeight="700" textAnchor="middle">
      <text x="1096" y="584" fill="#0a0a66">Y</text>
      <text x="1137" y="625" fill="#0a0a66">X</text>
      <text x="1866" y="168" fill="#1ea81e">Y</text>
      <text x="1908" y="209" fill="#e02a2a">X</text>
    </g>
    <path d="M1865.500 170l3.500 14h-7z" fill="#157a1c" />
  </Drawing>
);

const slash = <path d="M3 19L20 3" stroke="#8a9095" strokeOpacity=".45" />;
const FILTERS: [string, React.ReactNode][] = [
  ["点", <><path d="M11 5v12M5 11h12" stroke="#6d8aa0" strokeWidth="3" />{slash}</>],
  ["线", <><path d="M6 4v6M3 7h7M6 7l9 8M16 12v6M13 15h6" stroke="#8a929a" strokeWidth="1.500" />{slash}</>],
  ["圆", <><circle cx="11" cy="11" r="6.500" stroke="#7f929c" strokeWidth="2" />{slash}</>],
  ["曲线", <><path d="M4 4c7 0 6 3 8 8s4 5 6 5" stroke="#8b9db0" strokeWidth="2" />{slash}</>],
  ["曲面", <><path d="M5 7l6-2 6 2v9l-6 2-6-2zM5 7l12 9M17 7L5 16M11 5v13" stroke="#93a3b6" />{slash}</>],
  ["标注", <><path d="M4 5v12M18 5v12M5 11h12M8 9l-2 2 2 2M14 9l2 2-2 2" stroke="#8798a2" strokeWidth="1.500" />{slash}</>],
  ["网格", <><path d="M3 9l6-3 3 2 7 3-1 4-5 2-4-4-5-1 3-2z" fill="#c3bfa4" stroke="#a8a48e" />{slash}</>],
  ["实体", <><path d="M3 7l4-2 5 4 7 2v4l-5 2-4-4-6-1 3-2z" fill="#c9c39b" stroke="#a5a185" />{slash}</>],
  ["线框", <><path d="M5 7l6-2 6 2v9l-6 2-6-2zM7 9h8v5H7z" stroke="#9aa6a8" fill="#cdd5d5" />{slash}</>],
  ["立方体", <><path d="M4 7l7-2 7 2-7 2z" fill="#e4e2c2" /><path d="M4 7l7 2v9l-7-2z" fill="#d6d4a4" /><path d="M11 9l7-2v9l-7 2z" fill="#b9b9ae" />{slash}</>],
  ["颜色", <><path d="M11 3h10v9H11z" fill="#b9bcc8" /><path d="M2.500 10.500h9v8h-9z" fill="#e2ddc6" stroke="#c2b68e" /></>],
  ["层别", <><path d="M5 4.500h3v3H5zM5 9.500h3v3H5zM5 14.500h3v3H5z" stroke="#c0b78f" /><path d="M11 4.500h6v13h-6" stroke="#9dbab2" /></>],
  ["阵列", <><path d="M5 8h12M5 12h12M9 15h4" stroke="#a7a9a9" strokeWidth="3" strokeDasharray="3 1.500" />{slash}</>],
  ["设置", <><circle cx="11" cy="11" r="5" stroke="#d5d0ac" strokeWidth="3" />{slash}</>],
  ["清除", <><circle cx="11" cy="11" r="6.500" stroke="#eec0c0" strokeWidth="2" /><path d="M6 7l10 8" stroke="#eec0c0" strokeWidth="2" /></>],
];

const TASKS: [string, React.ReactNode][] = [
  ["搜狗浏览器", <><circle cx="16" cy="16" r="15" fill="#fff" /><circle cx="16" cy="16" r="13" fill="#3b8de0" /><path d="M23 8c-6-4-14-1-13 4 1 4 12 4 12 8 0 5-8 6-13 3" fill="none" stroke="#fff" strokeWidth="4.500" /></>],
  ["微信", <><ellipse cx="12" cy="13" rx="12" ry="10" fill="#6fca3c" /><path d="M4 20l-1 6 6-3z" fill="#6fca3c" /><ellipse cx="23" cy="20" rx="9" ry="8" fill="#f1f3f3" /><circle cx="8" cy="10" r="1.500" /><circle cx="16" cy="10" r="1.500" /><circle cx="20" cy="18" r="1" /><circle cx="26" cy="18" r="1" /></>],
  ["Mastercam", <><path d="M8 1h8l-1 10 8-10h8l-6 20h-6l4-12-8 12h-4l1-6-3 5H3z" fill="#c4143e" /><path d="M0 20L6 5M4 20L9 6" stroke="#c4143e" strokeWidth="1.500" /><path d="M6 9l6-3v2l4 3-5 3V12z" fill="#fff" /><text x="9" y="31" fontSize="10" fontWeight="800" fill="#111">2017</text></>],
  ["资源管理器", <><path d="M1 5h9l2 3h18v21H1z" fill="#f0d98a" stroke="#c9a94a" /><path d="M4 3h5v4H4zM13 4h5v4h-5zM22 6h6v3h-6z" fill="#4f9a52" /><path d="M1 11h30v18H1z" fill="#f8e7a8" /><path d="M6 32V21h20v11h-4v-5H10v5z" fill="#86c9e8" stroke="#4e9cc4" /></>],
  ["PowerPoint", <><path d="M5 1h24v8L26 26H1l2-22z" fill="#f8d9cc" stroke="#c4583a" /><path d="M11 9h20v22l-21-2z" fill="#fff" stroke="#d04f24" strokeWidth="1.500" /><path d="M13 12h16v13H13z" fill="#d9531e" /><path d="M15 15h5M15 18h5M15 21h5" stroke="#fff" strokeWidth="1.500" /><circle cx="25" cy="18" r="3" fill="none" stroke="#fff" strokeWidth="2" /></>],
  ["录屏", <><path d="M0 0h16v16H0z" fill="#7fb6ea" /><path d="M16 0h16v16H16z" fill="#a4dba0" /><path d="M0 16h16v16H0z" fill="#f6dc96" /><path d="M16 16h16v16H16z" fill="#f0c6bb" /><path d="M1 0l4-1 13 15-4 3z" fill="#c73a52" /><circle cx="17" cy="17" r="4" fill="#e01f1f" /></>],
];

const miniM = <path d="M0 13L4 2h3v4l4-5h4l-3 11H9l1-4-4 5z" fill="#d81e48" stroke="#fff" strokeWidth=".7" />;
const TRAY: [string, React.ReactNode][] = [
  ["Mastercam", <>{miniM}<circle cx="12" cy="12" r="3.500" fill="#f4c542" /></>],
  ["许可证", <>{miniM}<path d="M9 8h6v8H9z" fill="#fff" stroke="#555" strokeWidth=".7" /></>],
  ["同步", <><circle cx="8" cy="8" r="8" fill="#5b5e60" /><circle cx="8" cy="8" r="6.500" fill="#a3a6a7" /><path d="M11 5a4 4 0 100 6M11 3v4H7" fill="none" stroke="#fff" strokeWidth="2" /></>],
  ["音频", <><rect width="16" height="15" y="1" rx="2" fill="#2fd44e" /><path d="M1 8h2l1-4 2 9 2-11 2 11 2-8 2 4" fill="none" stroke="#1a1a8a" strokeWidth="1.500" /></>],
  ["微信", <><circle cx="6" cy="6" r="6" fill="#6fca3c" /><circle cx="11" cy="10" r="5" fill="#eef3ee" /></>],
  ["电脑管家", <><rect width="14" height="15" rx="2" fill="#2092e0" /><path d="M3 4h7v8" stroke="#fff" strokeWidth="2" fill="none" /><circle cx="12" cy="12" r="4" fill="#dc3030" /><path d="M10 12h4" stroke="#fff" /></>],
  ["QQ", <><ellipse cx="8" cy="8" rx="6" ry="8" fill="#17191c" /><ellipse cx="8" cy="11" rx="4" ry="4" fill="#fff" /><path d="M2 8h12v2H2z" fill="#dd2b2b" /><path d="M6 9h10v6H6z" fill="#f7b52c" /></>],
  ["电源", <><path d="M2 1h6v14H2z" fill="none" stroke="#fff" strokeWidth="1.500" /><path d="M9 3v4M13 3v4M8 7h6v3l-3 2v3" stroke="#fff" strokeWidth="1.500" fill="#fff" /></>],
  ["网络", <path d="M1 15v-2M4 15v-4M7 15V9M10 15V6M13 15V2" stroke="#fff" strokeWidth="2" />],
  ["任务管理器", <><rect y="0" x="1" width="14" height="16" fill="#1f2414" /><path d="M2 3h12M2 6h12M2 9h12M2 12h12" stroke="#8fd13c" strokeWidth="1.500" strokeDasharray="3 1" /></>],
];

const globe = (n: number) => (
  <svg width="16" height="16" viewBox="0 0 16 16" aria-hidden="true" fill="none" stroke="#dfe8f6">
    {n < 3 && <><circle cx="8" cy="8" r="6.500" strokeWidth="1.500" />{n < 2 ? <><ellipse cx="8" cy="8" rx="3" ry="6.500" /><path d="M2 6h12M2 10h12" /></> : <path d="M9 2c2 3 2 9 0 12M2 10h12" />}</>}
    {n >= 3 && <><defs><radialGradient id={`ball${n}`} cx=".4" cy=".35"><stop offset="0" stopColor="#fff" /><stop offset="1" stopColor="#a9aaa4" /></radialGradient></defs>
      <circle cx="8" cy="8" r="7" fill={`url(#ball${n})`} stroke="none" />{n === 5 && <path d="M2 14L14 2" stroke="#264f98" strokeWidth="1.500" />}</>}
  </svg>
);

export default function App() {
  return (
    <Shell>
      <GlobalStyle />
      <TitleBar>
        <QuickBar>
          <QuickBtn aria-label="Mastercam"><Glyph name="app" /></QuickBtn>
          <span />
          {[["新建", "newDoc"], ["保存", "save"], ["打开", "open"]].map(([l, i]) => <QuickBtn key={l} aria-label={l}><Glyph name={i} /></QuickBtn>)}
          <Caret />
          {[["打印", "print"], ["另存为", "saveAs"], ["压缩", "zip"]].map(([l, i]) => <QuickBtn key={l} aria-label={l}><Glyph name={i} /></QuickBtn>)}
          <QuickSep />
          {[["撤消", "undo"], ["重做", "redo"]].map(([l, i]) => <QuickBtn key={l} aria-label={l}><Glyph name={i} /></QuickBtn>)}
          <Caret />
        </QuickBar>
        <ContextHead>车床</ContextHead>
        <Title>{"Mastercam 车床 2017  E:\\加密教程\\mc_2017\\MC2017数控车教程\\第四章：刀路讲解\\内孔粗车\\内孔粗车.mcam"}</Title>
        <WindowBtns>
          {[["最小化", "M4 9.500h5"], ["还原", "M2.500 5.500h5v5h-5zM4.500 5V2.500h5v5H8"], ["关闭", "M2 2l8 8M10 2l-8 8"]].map(([l, d]) => (
            <button key={l} aria-label={l}><svg width="13" height="13" viewBox="0 0 13 13" fill="none" stroke="#4a4a4a" strokeWidth="1.500"><path d={d} /></svg></button>
          ))}
        </WindowBtns>
      </TitleBar>
      <TabRow>
        <FileTab>文件</FileTab>
        {["主页", "草图", "曲面", "实体", "建模", "标注", "转换", "机床", "视图"].map((t) => <Tab key={t}>{t}</Tab>)}
        <Tab $kind="active">车削</Tab>
        <Tab $kind="context">铣削</Tab>
        <TabSpacer />
        <button aria-label="帮助"><Glyph name="help" /></button>
        <button aria-label="折叠功能区"><svg width="16" height="10" viewBox="0 0 16 10" fill="none" stroke="#555" strokeWidth="2"><path d="M8 7l3-3 3 3" /></svg></button>
      </TabRow>
      <Ribbon>
        {GALLERIES.map((g) => (
          <Group key={g.name} $w={320}>
            <Gallery>
              {g.items.map(([t, i]) => <GalleryItem key={t}><Glyph name={i} />{t}</GalleryItem>)}
              <Scroll>
                <ScrollBtn aria-label="上一行"><Caret $up $c={g.canUp ? "#555" : "#c4c4c4"} /></ScrollBtn>
                <ScrollBtn aria-label="下一行"><Caret $c={g.canUp ? "#c4c4c4" : "#555"} /></ScrollBtn>
                <ScrollBtn aria-label="更多"><Bar /><Caret /></ScrollBtn>
              </Scroll>
            </Gallery>
            <GroupName>{g.name}</GroupName>
          </Group>
        ))}
        <Group $w={279}>
          <Tools>
            {TOOLS.map(([t, i]) => <Tool key={t} $wide={i === "align"}><Glyph name={i} />{t}{i === "stockModel" && <Caret />}</Tool>)}
          </Tools>
          <GroupName>工具</GroupName>
        </Group>
        <Watermark>
          <svg width="66" height="60" viewBox="0 0 66 60" fill="#fdfdfd" stroke="#b4b6b4" aria-hidden="true">
            <path d="M12 30v14l20 13 20-13V32L32 46 20 38z" />
            <path d="M32 1l31 22-31 23-10-8-9 6V31L1 23z" />
            <path d="M29 15l12 8-12 9z" />
          </svg>
          <WatermarkText>腾讯课堂</WatermarkText>
        </Watermark>
      </Ribbon>

      <Viewport>
        <PartDrawing />
        <Dock>
          <Panel>
            <PanelHead>
              <PanelTitle>刀路</PanelTitle>
              <button aria-label="面板选项"><svg width="10" height="6" viewBox="0 0 10 6"><path d="M0 0h9L4.500 5z" fill="#555" /></svg></button>
              <button aria-label="关闭面板"><svg width="10" height="10" viewBox="0 0 10 10"><path d="M1 1l8 8M9 1L1 9" stroke="#555" strokeWidth="1.500" /></svg></button>
            </PanelHead>
            {PANEL_ROWS.map((row, r) => (
              <ToolRow key={r} role="toolbar">
                {row.map((n, i) => n === "|" ? <ToolSep key={i} /> : <ToolBtn key={i}>{n === "G1" ? n : <Glyph name={n} />}</ToolBtn>)}
              </ToolRow>
            ))}
            <Tree role="tree">
              {TREE.map((n, i) => (
                <TreeRow key={i} role="treeitem">
                  {n.g.map((k, j) => <Guide key={j} kind={k} />)}
                  <Glyph name={n.icon} />
                  {n.text && <TreeText $sel={n.sel}>{n.text}{n.latin && <small>{n.latin}</small>}</TreeText>}
                </TreeRow>
              ))}
            </Tree>
            <PanelTabs>
              <PanelTab $on>刀路</PanelTab><PanelTab>实体</PanelTab><PanelTab>平面</PanelTab>
            </PanelTabs>
          </Panel>
          <ViewName>俯视图</ViewName>
        </Dock>
        <SelectionBar role="toolbar">
          <SelBtn><Glyph name="selLock" /></SelBtn>
          <SelBtn><Glyph name="selPick" />光标</SelBtn>
          <SelCaret><Caret $c="#6d777c" /></SelCaret>
          <SelBtn><Glyph name="axisPick" /></SelBtn>
          <SelBtn><Glyph name="gear" /></SelBtn>
          {["faintArrow", "solid1", "solid2", "solid3", "solid1", "solidShade", "selPick"].map((n, i) => <SelBtn key={i}><Glyph name={n} /></SelBtn>)}
          <SelCaret><Caret $c="#6d777c" /></SelCaret>
          <SelBtn><Glyph name="dashBox" /></SelBtn>
          <SelCaret><Caret $c="#6d777c" /></SelCaret>
          <SelBtn $on><Glyph name="chain" /></SelBtn>
          {["pickCheck", "pickCircle", "pickBack"].map((n) => <SelBtn key={n}><Glyph name={n} /></SelBtn>)}
        </SelectionBar>
        <Filters>
          {FILTERS.map(([l, d]) => (
            <FilterBtn key={l} aria-label={l}><svg width="22" height="22" viewBox="0 0 22 22" fill="none">{d}</svg></FilterBtn>
          ))}
        </Filters>
        <PointWin>
          <PointHead>Poin...<PointClose aria-label="关闭"><svg width="8" height="8" viewBox="0 0 8 8"><path d="M1 1l6 6M7 1L1 7" stroke="#333" strokeWidth="1.500" /></svg></PointClose></PointHead>
          <PointStart>开始</PointStart>
        </PointWin>
        <ScaleMark><span>15.584 mm</span><span>公制</span></ScaleMark>
      </Viewport>

      <SheetBar>
        <SheetTab>视图面板1</SheetTab>
        <SheetRest>
          <button aria-label="向左"><svg width="7" height="11" viewBox="0 0 7 11" fill="none" stroke="#555"><path d="M5.500 1v9L1.500 5.500z" /></svg></button>
          <button aria-label="向右"><svg width="7" height="11" viewBox="0 0 7 11" fill="none" stroke="#555"><path d="M1.500 1v9l4-4.500z" /></svg></button>
        </SheetRest>
      </SheetBar>
      <StatusBar>
        <Readout $w={94}><span>X:</span><span>-103.74612</span></Readout>
        <Readout $w={89}><span>Y:</span><span>24.13321</span></Readout>
        <Readout $w={62}><span>Z:</span><span>0.00000</span></Readout>
        <StatusCaret><Caret $c="#6f7fa5" /></StatusCaret>
        <StatusBtn $w={28}>3D</StatusBtn>
        <StatusBtn>绘图平面: 俯视图<StatusCaret><Caret $c="#6f7fa5" /></StatusCaret></StatusBtn>
        <StatusBtn>刀具平面: 俯视图<StatusCaret><Caret $c="#6f7fa5" /></StatusCaret></StatusBtn>
        <StatusBtn>WCS: 俯视图<StatusCaret><Caret $c="#6f7fa5" /></StatusCaret></StatusBtn>
        {["线框", "暗线", "无隐藏", "边框着色", "着色", "半透明"].map((l, n) => <ShadeBtn key={l} aria-label={l} $on={n === 3}>{globe(n)}</ShadeBtn>)}
      </StatusBar>
      <TaskBar>
        <StartBtn aria-label="开始">
          <svg width="38" height="38" viewBox="0 0 38 38" aria-hidden="true">
            <defs><radialGradient id="orb" cx=".5" cy=".85" r=".8"><stop offset="0" stopColor="#39c6ea" /><stop offset=".5" stopColor="#1c6ea5" /><stop offset="1" stopColor="#5d86ab" /></radialGradient></defs>
            <circle cx="19" cy="19" r="17.500" fill="url(#orb)" stroke="#2b4c6b" />
            <path d="M10 11c3-2 5-2 8 0l-1 7c-3-2-5-2-8 0z" fill="#ea6a2e" />
            <path d="M20 12c3 2 5 2 8 0l-1 7c-3 2-5 2-8 0z" fill="#8cc63f" />
            <path d="M9 20c3-2 5-2 8 0l-1 7c-3-2-5-2-8 0z" fill="#4aa8e0" />
            <path d="M19 21c3 2 5 2 8 0l-1 7c-3 2-5 2-8 0z" fill="#f8c93a" />
          </svg>
        </StartBtn>
        {TASKS.map(([l, d], i) => (
          <TaskBtn key={l} aria-label={l} $on={i === 2}><svg width="32" height="33" viewBox="0 0 32 33">{d}</svg></TaskBtn>
        ))}
        <Tray>
          <TrayBtn $slim aria-label="键盘"><svg width="14" height="10" viewBox="0 0 14 10"><rect x=".5" y=".5" width="13" height="9" fill="none" stroke="#e6ebf0" /><path d="M2 3h10M2 5h10M4 7.500h6" stroke="#e6ebf0" strokeDasharray="1 1" /></svg></TrayBtn>
          <TrayBtn $slim aria-label="显示隐藏的图标"><svg width="10" height="20" viewBox="0 0 10 20"><path d="M3.500 1.500h5v4h-5zM1.500 3.500h5v4h-5z" fill="none" stroke="#fff" /><path d="M2 14h6l-3 3z" fill="#fff" /></svg></TrayBtn>
          {TRAY.map(([l, d], i) => <TrayBtn key={i} aria-label={l}><svg width="16" height="16" viewBox="0 0 16 16">{d}</svg></TrayBtn>)}
          <Clock>20:29<br />2018/5/21</Clock>
          <Peek aria-label="显示桌面" />
        </Tray>
      </TaskBar>

      <RootMenu role="menu"><Entries list={ROOT} /></RootMenu>
      <ClickHalo />
      <Cursor $x={510} $y={731}>{arrowCursor}</Cursor>
      <Cursor $x={400} $y={1060}>{arrowCursor}</Cursor>
    </Shell>
  );
}
